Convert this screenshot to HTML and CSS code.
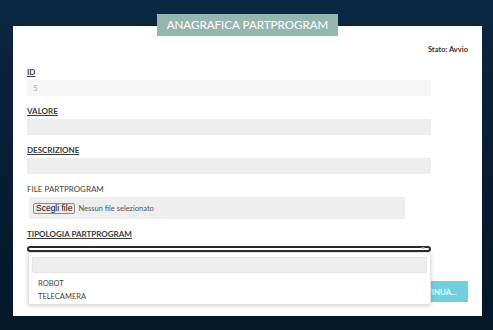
FILE: index.html
```html
<!DOCTYPE html>
<html lang="it">
<head>
    <meta charset="UTF-8">
    <meta name="viewport" content="width=device-width, initial-scale=1.0">
    <title>Anagrafica Partprogram</title>
    <link rel="stylesheet" href="styles.css">
</head>
<body>
    <div class="page">
        <div class="tab">ANAGRAFICA PARTPROGRAM</div>
        <div class="panel">
            <div class="stato">Stato: Avvio</div>

            <div class="field">
                <label class="lbl">ID</label>
                <input class="inp inp-ro" type="text" value="5" readonly>
            </div>
            <div class="field">
                <label class="lbl">VALORE</label>
                <input class="inp" type="text">
            </div>
            <div class="field">
                <label class="lbl">DESCRIZIONE</label>
                <input class="inp" type="text">
            </div>
            <div class="field">
                <label class="lbl lbl-plain">FILE PARTPROGRAM</label>
                <div class="file-box">
                    <span class="file-btn">Scegli file</span>
                    <span class="file-name">Nessun file selezionato</span>
                </div>
            </div>
            <div class="field field-select">
                <label class="lbl">TIPOLOGIA PARTPROGRAM</label>
                <div class="select">
                    <span class="select-arrow"></span>
                </div>
                <div class="dropdown">
                    <div class="dd-search"></div>
                    <div class="dd-option">ROBOT</div>
                    <div class="dd-option">TELECAMERA</div>
                </div>
            </div>

            <div class="actions">
                <button class="btn">CONTINUA...</button>
            </div>
        </div>
    </div>
</body>
</html>
```

FILE: styles.css
```css
html, body {
    margin: 0;
    height: 100%;
}
body {
    font-family: Lato, "Open Sans", sans-serif;
    background: linear-gradient(180deg, #0c2741 0%, #061c30 60%, #04182a 100%);
    overflow: hidden;
}
.page {
    display: flex;
    flex-direction: column;
    padding: 14px 11px 0 13px;
}
.tab {
    align-self: center;
    position: relative;
    z-index: 2;
    height: 22px;
    line-height: 22px;
    padding: 0 10px;
    background-color: #95b6ae;
    color: #fff;
    font-size: 11.6px;
    margin-bottom: -10px;
}
.panel {
    position: relative;
    background: #fff;
    padding: 19px 14px 13px 14px;
    height: 258px;
}
.stato {
    text-align: right;
    font-size: 7.5px;
    font-weight: bold;
    color: #333;
    line-height: 10px;
    margin-bottom: 12px;
}
.field {
    display: flex;
    flex-direction: column;
    align-items: flex-start;
    margin-bottom: 10px;
}
.lbl {
    font-size: 8px;
    font-weight: bold;
    color: #3a3a3a;
    text-decoration: underline;
    line-height: 10px;
    margin-bottom: 3px;
}
.lbl-plain {
    font-weight: normal;
    text-decoration: none;
    color: #444;
}
.inp {
    width: 404px;
    height: 16px;
    box-sizing: border-box;
    border: none;
    background-color: #eee;
    padding: 0 6px;
    font-family: Lato, sans-serif;
    font-size: 8px;
    color: #aaa;
    outline: none;
}
.inp-ro {
    background-color: #f5f5f5;
}
.file-box {
    width: 376px;
    height: 22px;
    box-sizing: border-box;
    margin-left: 2px;
    background-color: #eee;
    display: flex;
    align-items: center;
    padding-left: 4px;
    gap: 3px;
}
.file-btn {
    font-family: "Liberation Sans", Arial, sans-serif;
    font-size: 8.5px;
    color: #111;
    background: #e9e9e9;
    border: 1px solid #8a8a8a;
    border-radius: 2px;
    padding: 0 2px;
    line-height: 9px;
}
.file-name {
    font-size: 7.5px;
    color: #555;
}
.field-select {
    position: relative;
    margin-top: 0;
    margin-bottom: 29px;
}
.field-select .lbl {
    margin-bottom: 7px;
}
.select {
    position: relative;
    width: 404px;
    height: 6px;
    box-sizing: border-box;
    border: 2px solid #2b2b2b;
    border-radius: 4px;
    background: #fff;
}
.select-arrow {
    position: absolute;
    right: 4px;
    top: -1px;
    border-left: 2px solid transparent;
    border-right: 2px solid transparent;
    border-top: 2px solid #999;
}
.dropdown {
    position: absolute;
    z-index: 3;
    left: 1px;
    top: 23px;
    width: 403px;
    height: 53px;
    box-sizing: border-box;
    background: #fff;
    border: 1px solid #e2e2e2;
    border-radius: 2px;
    box-shadow: 0 1px 4px rgba(0,0,0,0.18);
    padding: 4px 3px;
}
.dd-search {
    height: 16px;
    background: #eee;
    border: 1px solid #e4e4e4;
    border-radius: 2px;
    box-sizing: border-box;
    margin-bottom: 4px;
}
.dd-option {
    font-size: 7.5px;
    color: #444;
    line-height: 13px;
    padding-left: 6px;
}
.actions {
    display: flex;
    justify-content: flex-end;
}
.btn {
    background-color: #72cfdd;
    color: #fff;
    border: none;
    height: 21px;
    width: 70px;
    padding: 0;
    font-family: Lato, sans-serif;
    font-size: 8px;
    cursor: pointer;
}
```
